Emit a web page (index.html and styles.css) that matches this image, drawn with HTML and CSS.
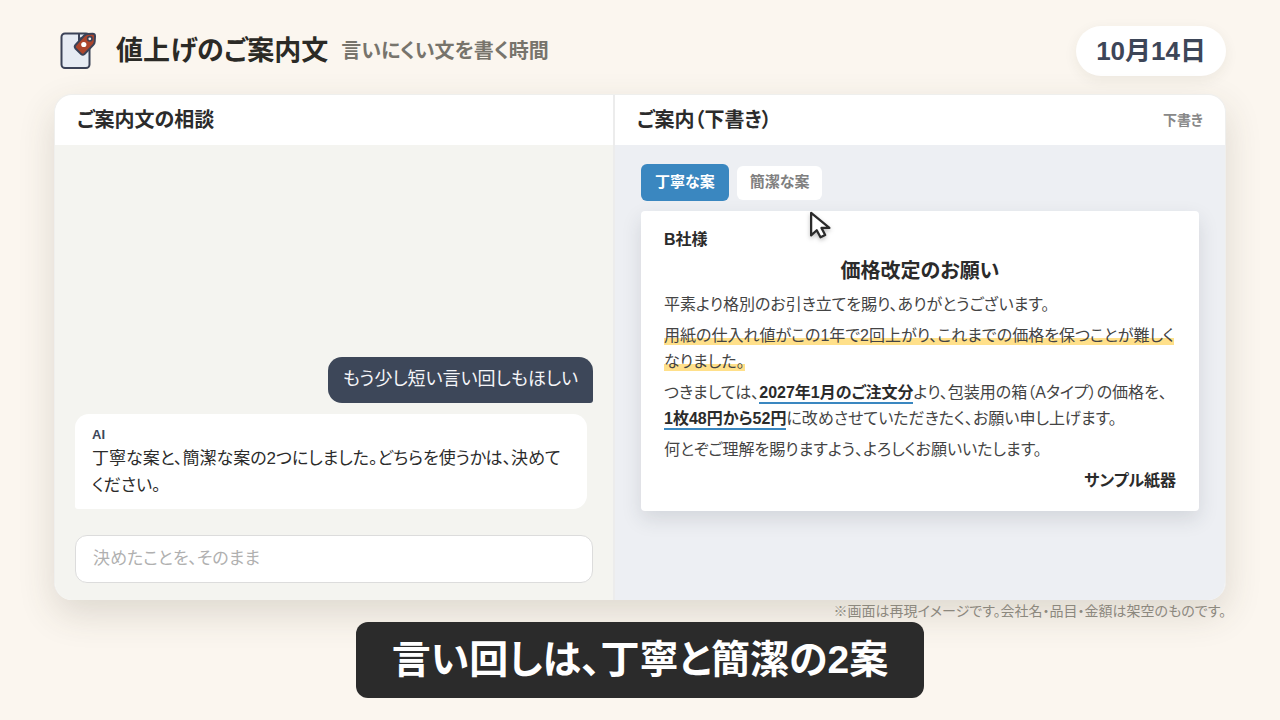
FILE: index.html
```html
<!DOCTYPE html>
<html lang="ja">
<head>
<meta charset="utf-8">
<meta name="viewport" content="width=device-width, initial-scale=1">
<title>値上げのご案内文</title>
<link rel="stylesheet" href="styles.css">
</head>
<body>
<div class="page">
  <header class="topbar">
    <svg class="logo" viewBox="0 0 40 40" aria-hidden="true">
      <rect x="3.500" y="2.500" width="28" height="34.500" rx="3.500" fill="#e6ebf3" stroke="#3b4257" stroke-width="2"/>
      <path d="M21 3v5.500l3-2" fill="none" stroke="#3b4257" stroke-width="2"/>
      <path d="M17.500 14 26 4.800Q27.500 3.300 29.500 3.100L34.500 2.700Q37 2.600 37 5.100L36.700 10.700Q36.600 12.500 35.300 13.900L26.500 23Q24.800 24.500 23.100 22.900L17.500 17.500Q16 15.800 17.500 14Z" fill="#ac452c" stroke="#3b4257" stroke-width="2"/>
      <circle cx="31.800" cy="7.800" r="2.200" fill="#f3ece8" stroke="#3b4257" stroke-width="1.600"/>
      <circle cx="25.800" cy="13.500" r="2.600" fill="#fff"/>
    </svg>
    <h1 class="title">値上げのご案内文</h1>
    <p class="subtitle">言いにくい文を書く時間</p>
    <time class="date">10月14日</time>
  </header>

  <main class="window">
    <section class="pane chat">
      <div class="pane-head"><h2>ご案内文の相談</h2></div>
      <div class="chat-body">
        <p class="bubble user">もう少し短い言い回しもほしい</p>
        <div class="bubble ai">
          <span class="speaker">AI</span>
          <p>丁寧な案と、簡潔な案の2つにしました。どちらを使うかは、決めてください。</p>
        </div>
        <input class="composer" type="text" aria-label="メッセージ" placeholder="決めたことを、そのまま">
      </div>
    </section>

    <section class="pane draft">
      <div class="pane-head"><h2>ご案内（下書き）</h2><span class="status">下書き</span></div>
      <div class="draft-body">
        <div class="tabs">
          <button class="tab active" type="button">丁寧な案</button>
          <button class="tab" type="button">簡潔な案</button>
        </div>
        <article class="paper">
          <p class="strong">B社様</p>
          <h3>価格改定のお願い</h3>
          <p>平素より格別のお引き立てを賜り、ありがとうございます。</p>
          <p><mark>用紙の仕入れ値がこの1年で2回上がり、これまでの価格を保つことが難しくなりました。</mark></p>
          <p>つきましては、<b>2027年1月のご注文分</b>より、包装用の箱（Aタイプ）の価格を、<b>1枚48円から52円</b>に改めさせていただきたく、お願い申し上げます。</p>
          <p>何とぞご理解を賜りますよう、よろしくお願いいたします。</p>
          <p class="strong sign">サンプル紙器</p>
          <svg class="cursor" viewBox="0 0 24 32" aria-hidden="true">
            <path d="M2 2v24l6-5.500 4 7.500 5-2.500-4-7.500h8.500z" fill="#fff" stroke="#2b2b2b" stroke-width="2.400" stroke-linejoin="round"/>
          </svg>
        </article>
      </div>
    </section>
  </main>

  <p class="note">※画面は再現イメージです。会社名・品目・金額は架空のものです。</p>
  <p class="caption">言い回しは、丁寧と簡潔の2案</p>
</div>
</body>
</html>
```
FILE: styles.css
```css
* { box-sizing: border-box; }
body, h1, h2, h3, p { margin: 0; }
body, button, input {
  font-family: "Liberation Sans", "Noto Sans CJK JP", sans-serif;
  font-feature-settings: "palt";
}
body { background: #fbf6ef; color: #2b2b2b; }
.page {
  min-height: 100vh;
  padding: 26px 54px 22px;
  display: flex;
  flex-direction: column;
}
.topbar { display: flex; align-items: center; height: 50px; }
.logo { width: 40px; height: 40px; margin: 0 18px 0 4px; }
.title { font-size: 27px; line-height: 40px; color: #2b2a26; }
.subtitle { margin-left: 13px; font-size: 20px; font-weight: 700; line-height: 30px; color: #77746c; }
.date {
  margin-left: auto;
  padding: 0 20px;
  border-radius: 25px;
  background: #fff;
  color: #3d4658;
  font-size: 26px;
  font-weight: 700;
  line-height: 50px;
  box-shadow: 0 4px 14px rgba(60, 50, 30, .07);
}
.window {
  flex: 1;
  margin-top: 18px;
  display: grid;
  grid-template-columns: 559fr 613fr;
  border-radius: 18px;
  overflow: hidden;
  border: 1px solid #efefed;
  border-bottom: 0;
  background: #fff;
  box-shadow: 0 14px 36px rgba(70, 65, 45, .16);
}
.pane { display: flex; flex-direction: column; min-width: 0; }
.draft { border-left: 2px solid #ececec; }
.pane-head {
  display: flex;
  align-items: center;
  justify-content: space-between;
  height: 50px;
  padding: 0 22px;
}
.pane-head h2 { font-size: 20px; line-height: 30px; }
.status { font-size: 14px; font-weight: 700; line-height: 22px; color: #888; }
.chat-body {
  flex: 1;
  display: flex;
  flex-direction: column;
  justify-content: flex-end;
  padding: 18px 20px 17px;
  background: #f4f4f0;
}
.bubble { font-size: 17px; line-height: 27px; border-radius: 14px; }
.user {
  align-self: flex-end;
  padding: 9px 15px 10px;
  border-bottom-right-radius: 3px;
  background: #3d4759;
  color: #f4f5f8;
  font-size: 18px;
}
.ai {
  width: 512px;
  max-width: 100%;
  margin: 11px 0 26px;
  padding: 11px 17px 10px;
  border-bottom-left-radius: 3px;
  background: #fff;
}
.speaker { display: block; font-size: 13px; font-weight: 700; line-height: 20px; color: #3d4759; }
.composer {
  width: 100%;
  height: 48px;
  padding: 0 17px;
  border: 1px solid #dcdcdc;
  border-radius: 12px;
  background: #fff;
  font-size: 17px;
}
.composer::placeholder { color: #b0b0b0; opacity: 1; }
.draft-body { flex: 1; padding: 19px 26px; background: #edeff3; }
.tabs { display: flex; align-items: center; gap: 8px; }
.tab {
  height: 34px;
  padding: 0 13px 4px;
  border: 0;
  border-radius: 6px;
  background: #fff;
  color: #808080;
  font-size: 15px;
  font-weight: 700;
}
.tab.active { height: 37px; padding: 0 14px 4px; background: #3a87c0; color: #fff; }
.paper {
  position: relative;
  margin-top: 10px;
  padding: 16px 23px 17px;
  border-radius: 4px;
  background: #fff;
  box-shadow: 0 8px 20px rgba(40, 45, 60, .13);
  font-size: 16px;
  line-height: 26px;
  color: #444;
}
.paper p + p { margin-top: 5px; }
.paper h3 { margin: 5px 0 8px; font-size: 20px; line-height: 26px; text-align: center; color: #2b2b2b; }
.strong, .paper b { font-weight: 700; color: #2b2b2b; }
.paper mark { padding-bottom: 1px; color: inherit; background: linear-gradient(transparent 60%, #ffe08a 60%); }
.paper b { white-space: nowrap; padding-bottom: 1px; border-bottom: 2px solid #3a87c0; }
.sign { text-align: right; }
.cursor {
  position: absolute;
  left: 168px;
  top: 0;
  width: 23px;
  height: 30px;
  filter: drop-shadow(0 2px 2px rgba(0, 0, 0, .25));
}
.note { font-size: 14px; line-height: 22px; text-align: right; color: #8c887e; }
.caption {
  align-self: center;
  padding: 0 36px;
  border-radius: 12px;
  background: #2b2b2b;
  color: #fff;
  font-size: 39px;
  font-weight: 700;
  line-height: 76px;
}
```
